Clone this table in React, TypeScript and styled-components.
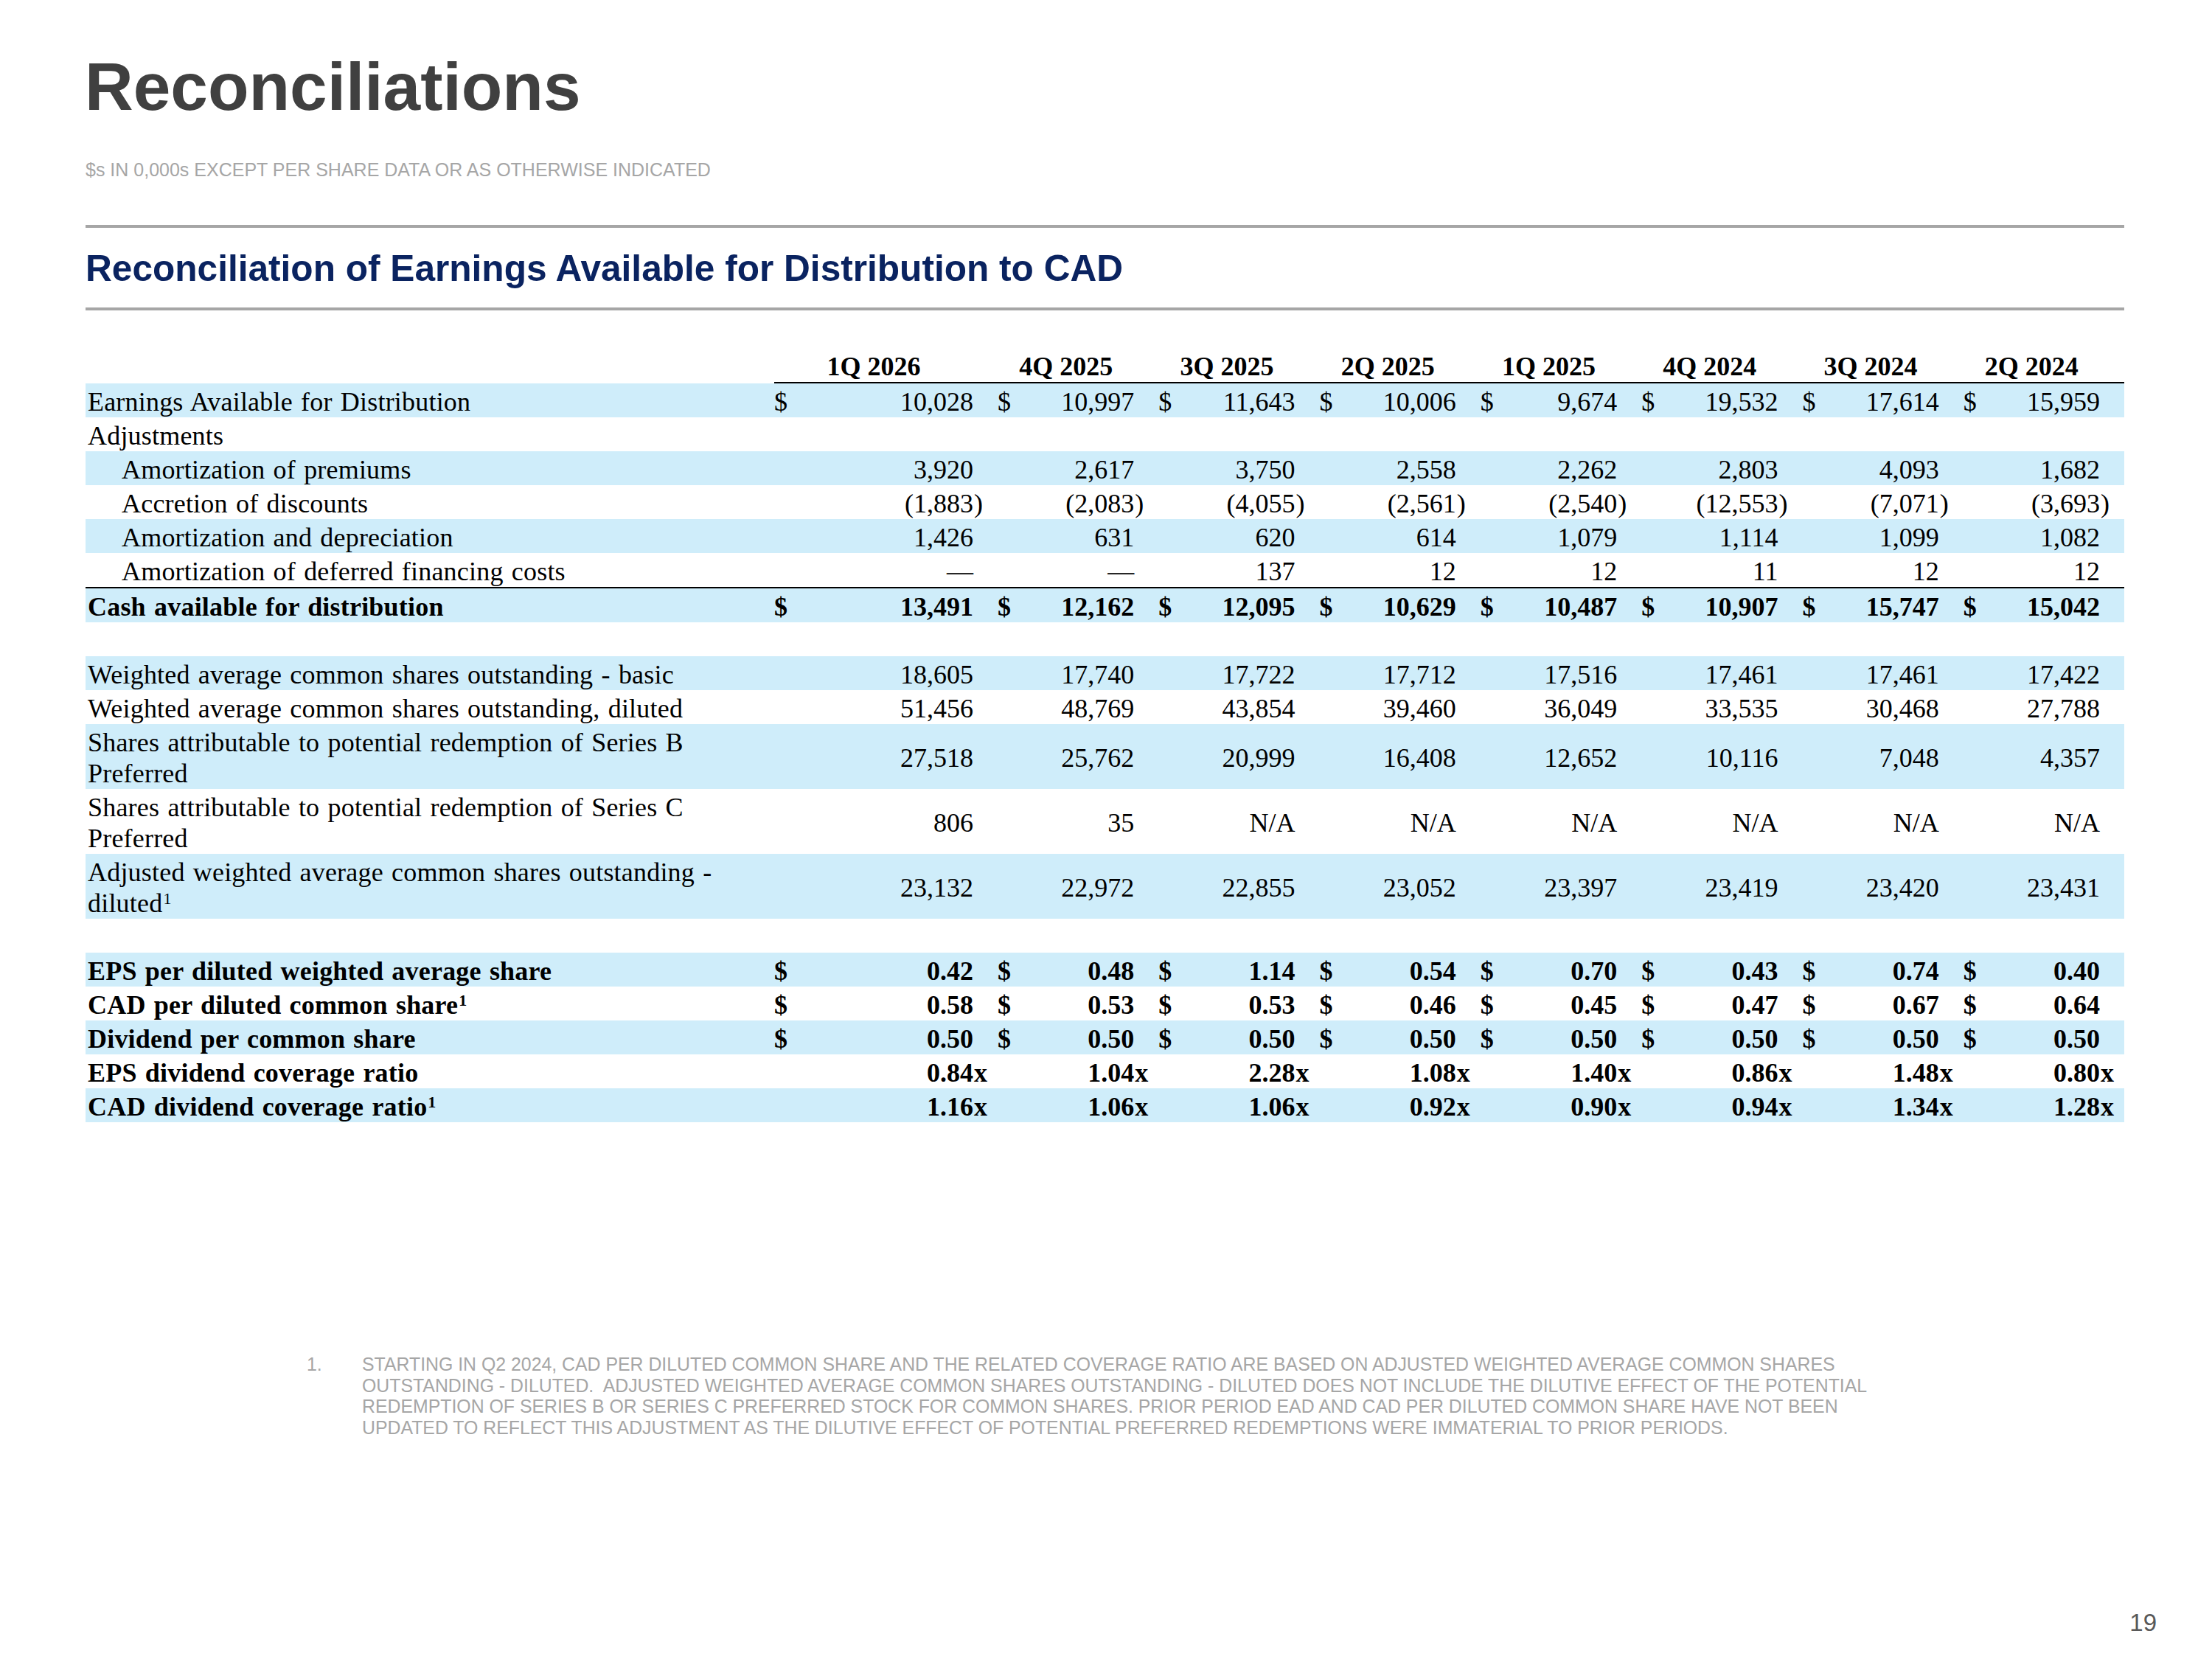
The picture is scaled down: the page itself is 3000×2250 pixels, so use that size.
import React from 'react';
import styled, { createGlobalStyle } from 'styled-components';

const SANS = `'Liberation Sans', Arial, Helvetica, sans-serif`;
const SERIF = `'Liberation Serif', 'Times New Roman', Times, serif`;

const GlobalStyle = createGlobalStyle`
  html, body { margin: 0; padding: 0; background: #ffffff; }
  * { box-sizing: border-box; }
`;

const Page = styled.div`
  width: 3000px;
  height: 2250px;
  padding: 72px 119px 0 116px;
  display: flex;
  flex-direction: column;
  font-family: ${SANS};
  overflow: hidden;
`;

const Title = styled.h1`
  margin: 0 0 0 -1px;
  font-size: 91px;
  line-height: 91px;
  font-weight: 700;
  color: #404040;
`;

const Subtitle = styled.div`
  margin-top: 52px;
  font-size: 25px;
  line-height: 30px;
  color: #a6a6a6;
`;

const Rule = styled.div<{ $top: number }>`
  margin-top: ${(p) => p.$top}px;
  height: 4px;
  background: #a6a6a6;
`;

const Heading = styled.h2`
  margin: 27px 0 0;
  font-size: 49.6px;
  line-height: 56px;
  font-weight: 700;
  color: #0a2360;
`;

const COLS = `934px 303px repeat(7, 1fr)`;

const Table = styled.div`
  margin-top: 50.5px;
  font-family: ${SERIF};
  font-size: 36px;
  color: #000;
`;

const HeadRow = styled.div`
  display: grid;
  grid-template-columns: ${COLS};
`;

const HeadCell = styled.div`
  height: 48px;
  padding: 4px 33px 0 0;
  line-height: 42px;
  font-weight: 700;
  text-align: center;
  white-space: nowrap;
  border-bottom: 2px solid #000;
`;

const Row = styled.div<{ $band?: boolean; $bold?: boolean; $rule?: boolean }>`
  display: grid;
  grid-template-columns: ${COLS};
  background: ${(p) => (p.$band ? '#cfedfa' : 'transparent')};
  font-weight: ${(p) => (p.$bold ? 700 : 400)};
  border-bottom: ${(p) => (p.$rule ? '2px solid #000' : '0')};
`;

const Spacer = styled.div`
  height: 46px;
`;

const Label = styled.div<{ $indent?: boolean }>`
  padding: 4px 50px 0 ${(p) => (p.$indent ? 49 : 3)}px;
  line-height: 42px;
  letter-spacing: 0.2px;
  word-spacing: 2px;
`;

const Sup = styled.sup`
  font-size: 22px;
  line-height: 0;
  vertical-align: 0.5em;
  margin-left: 1px;
`;

const Value = styled.div`
  display: flex;
  align-items: center;
  padding-top: 4px;
  line-height: 42px;
  white-space: nowrap;
`;

const Dollar = styled.span`
  flex: none;
`;

const Num = styled.span`
  flex: 1;
  text-align: right;
`;

const Suffix = styled.span`
  flex: none;
  width: 33px;
  padding-left: 1px;
  text-align: left;
`;

const Footnote = styled.div`
  margin: 315px 0 0 300px;
  display: grid;
  grid-template-columns: 75px auto;
  font-size: 24.85px;
  line-height: 28.7px;
  color: #a6a6a6;
  white-space: pre;
`;

const FootLine = styled.div`
  display: block;
`;

const PageNumber = styled.div`
  margin: auto -44px 29px 0;
  align-self: flex-end;
  font-size: 33px;
  line-height: 40px;
  color: #595959;
`;

const periods = ['1Q 2026', '4Q 2025', '3Q 2025', '2Q 2025', '1Q 2025', '4Q 2024', '3Q 2024', '2Q 2024'];

type DataRow = {
  label: string;
  sup?: boolean;
  indent?: boolean;
  bold?: boolean;
  band?: boolean;
  rule?: boolean;
  dollar?: boolean;
  neg?: boolean;
  ratio?: boolean;
  values: string[];
};

type RowDef = DataRow | 'spacer';

const rows: RowDef[] = [
  { label: 'Earnings Available for Distribution', band: true, dollar: true, values: ['10,028', '10,997', '11,643', '10,006', '9,674', '19,532', '17,614', '15,959'] },
  { label: 'Adjustments', values: [] },
  { label: 'Amortization of premiums', indent: true, band: true, values: ['3,920', '2,617', '3,750', '2,558', '2,262', '2,803', '4,093', '1,682'] },
  { label: 'Accretion of discounts', indent: true, neg: true, values: ['1,883', '2,083', '4,055', '2,561', '2,540', '12,553', '7,071', '3,693'] },
  { label: 'Amortization and depreciation', indent: true, band: true, values: ['1,426', '631', '620', '614', '1,079', '1,114', '1,099', '1,082'] },
  { label: 'Amortization of deferred financing costs', indent: true, rule: true, values: ['\u2014', '\u2014', '137', '12', '12', '11', '12', '12'] },
  { label: 'Cash available for distribution', bold: true, band: true, dollar: true, values: ['13,491', '12,162', '12,095', '10,629', '10,487', '10,907', '15,747', '15,042'] },
  'spacer',
  { label: 'Weighted average common shares outstanding - basic', band: true, values: ['18,605', '17,740', '17,722', '17,712', '17,516', '17,461', '17,461', '17,422'] },
  { label: 'Weighted average common shares outstanding, diluted', values: ['51,456', '48,769', '43,854', '39,460', '36,049', '33,535', '30,468', '27,788'] },
  { label: 'Shares attributable to potential redemption of Series B Preferred', band: true, values: ['27,518', '25,762', '20,999', '16,408', '12,652', '10,116', '7,048', '4,357'] },
  { label: 'Shares attributable to potential redemption of Series C Preferred', values: ['806', '35', 'N/A', 'N/A', 'N/A', 'N/A', 'N/A', 'N/A'] },
  { label: 'Adjusted weighted average common shares outstanding - diluted', sup: true, band: true, values: ['23,132', '22,972', '22,855', '23,052', '23,397', '23,419', '23,420', '23,431'] },
  'spacer',
  { label: 'EPS per diluted weighted average share', bold: true, band: true, dollar: true, values: ['0.42', '0.48', '1.14', '0.54', '0.70', '0.43', '0.74', '0.40'] },
  { label: 'CAD per diluted common share', sup: true, bold: true, dollar: true, values: ['0.58', '0.53', '0.53', '0.46', '0.45', '0.47', '0.67', '0.64'] },
  { label: 'Dividend per common share', bold: true, band: true, dollar: true, values: ['0.50', '0.50', '0.50', '0.50', '0.50', '0.50', '0.50', '0.50'] },
  { label: 'EPS dividend coverage ratio', bold: true, ratio: true, values: ['0.84', '1.04', '2.28', '1.08', '1.40', '0.86', '1.48', '0.80'] },
  { label: 'CAD dividend coverage ratio', sup: true, bold: true, band: true, ratio: true, values: ['1.16', '1.06', '1.06', '0.92', '0.90', '0.94', '1.34', '1.28'] },
];

const footLines = [
  'STARTING IN Q2 2024, CAD PER DILUTED COMMON SHARE AND THE RELATED COVERAGE RATIO ARE BASED ON ADJUSTED WEIGHTED AVERAGE COMMON SHARES',
  'OUTSTANDING - DILUTED.  ADJUSTED WEIGHTED AVERAGE COMMON SHARES OUTSTANDING - DILUTED DOES NOT INCLUDE THE DILUTIVE EFFECT OF THE POTENTIAL',
  'REDEMPTION OF SERIES B OR SERIES C PREFERRED STOCK FOR COMMON SHARES. PRIOR PERIOD EAD AND CAD PER DILUTED COMMON SHARE HAVE NOT BEEN',
  'UPDATED TO REFLECT THIS ADJUSTMENT AS THE DILUTIVE EFFECT OF POTENTIAL PREFERRED REDEMPTIONS WERE IMMATERIAL TO PRIOR PERIODS.',
];

function DataLine({ r }: { r: DataRow }) {
  const cells = r.values.length ? r.values : periods.map(() => '');
  return (
    <Row $band={r.band} $bold={r.bold} $rule={r.rule}>
      <Label $indent={r.indent}>
        {r.label}
        {r.sup && <Sup>1</Sup>}
      </Label>
      {cells.map((v, i) => (
        <Value key={i}>
          <Dollar>{r.dollar ? '$' : ''}</Dollar>
          <Num>
            {r.neg ? '(' : ''}
            {v}
          </Num>
          <Suffix>{r.neg ? ')' : r.ratio ? 'x' : ''}</Suffix>
        </Value>
      ))}
    </Row>
  );
}

export default function App() {
  return (
    <>
      <GlobalStyle />
      <Page>
        <Title>Reconciliations</Title>
        <Subtitle>$s IN 0,000s EXCEPT PER SHARE DATA OR AS OTHERWISE INDICATED</Subtitle>
        <Rule $top={60} />
        <Heading>Reconciliation of Earnings Available for Distribution to CAD</Heading>
        <Rule $top={25.3} />
        <Table>
          <HeadRow>
            <div />
            {periods.map((p) => (
              <HeadCell key={p}>{p}</HeadCell>
            ))}
          </HeadRow>
          {rows.map((r, i) => (r === 'spacer' ? <Spacer key={i} /> : <DataLine key={i} r={r} />))}
        </Table>
        <Footnote>
          <span>1.</span>
          <div>
            {footLines.map((l, i) => (
              <FootLine key={i}>{l}</FootLine>
            ))}
          </div>
        </Footnote>
        <PageNumber>19</PageNumber>
      </Page>
    </>
  );
}
